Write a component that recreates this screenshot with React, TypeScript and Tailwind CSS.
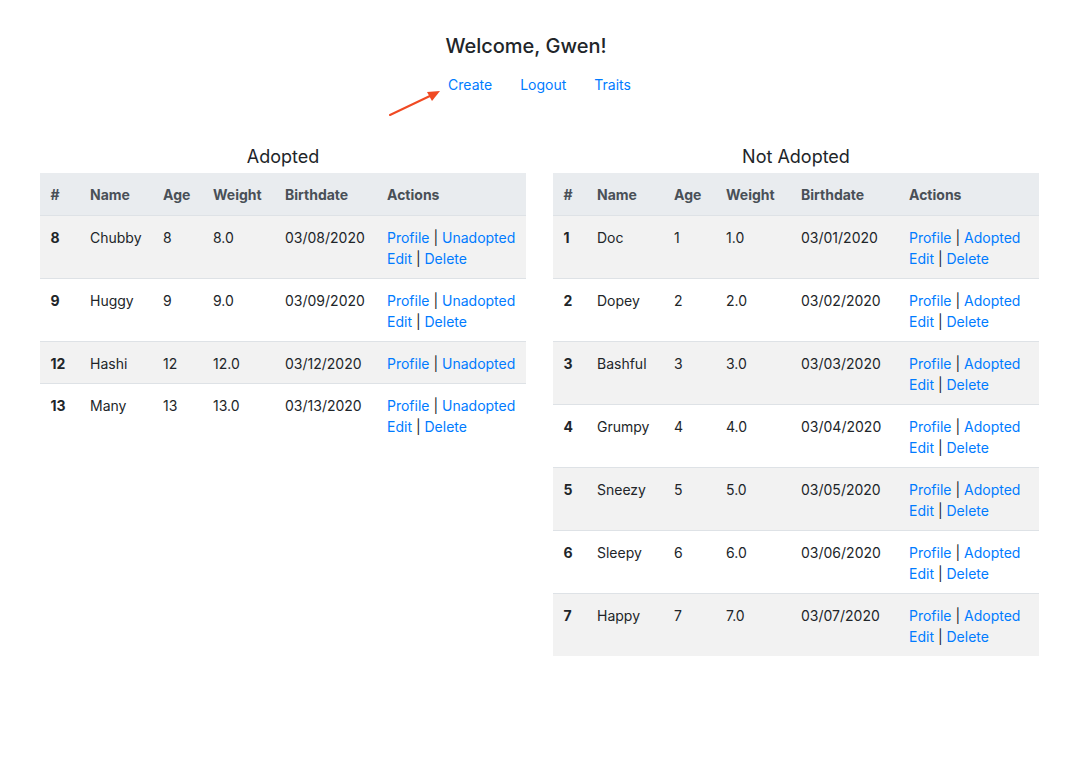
type Pet = { id: number; name: string; age: number; day: string; edit: boolean };

const adopted: Pet[] = [
  { id: 8, name: "Chubby", age: 8, day: "08", edit: true },
  { id: 9, name: "Huggy", age: 9, day: "09", edit: true },
  { id: 12, name: "Hashi", age: 12, day: "12", edit: false },
  { id: 13, name: "Many", age: 13, day: "13", edit: true },
];

const notAdopted: Pet[] = [
  { id: 1, name: "Doc", age: 1, day: "01", edit: true },
  { id: 2, name: "Dopey", age: 2, day: "02", edit: true },
  { id: 3, name: "Bashful", age: 3, day: "03", edit: true },
  { id: 4, name: "Grumpy", age: 4, day: "04", edit: true },
  { id: 5, name: "Sneezy", age: 5, day: "05", edit: true },
  { id: 6, name: "Sleepy", age: 6, day: "06", edit: true },
  { id: 7, name: "Happy", age: 7, day: "07", edit: true },
];

const cell = "px-[10.5px] pt-[11px] pb-[9px] align-top text-left";

function PetTable({
  title,
  pets,
  toggle,
  widths,
}: {
  title: string;
  pets: Pet[];
  toggle: string;
  widths: string[];
}) {
  return (
    <div className="w-[486px]">
      <h2 className="pb-[4px] text-center text-[18px] leading-[24px] text-[#212529]">{title}</h2>
      <table className="w-full table-fixed border-collapse text-[14px] leading-[21px]">
        <colgroup>
          {widths.map((w, i) => (
            <col key={i} className={w} />
          ))}
        </colgroup>
        <thead>
          <tr className="bg-[#e9ecef] text-[#495057]">
            {["#", "Name", "Age", "Weight", "Birthdate", "Actions"].map((h) => (
              <th key={h} className={`${cell} border-b border-[#dee2e6] !pb-[10px] font-bold`}>
                {h}
              </th>
            ))}
          </tr>
        </thead>
        <tbody>
          {pets.map((p, i) => (
            <tr
              key={p.id}
              className={`border-t border-[#dee2e6] ${i % 2 === 0 ? "bg-[#f2f2f2]" : "bg-white"}`}
            >
              <th className={`${cell} font-bold`}>{p.id}</th>
              <td className={cell}>{p.name}</td>
              <td className={cell}>{p.age}</td>
              <td className={cell}>{p.age}.0</td>
              <td className={cell}>03/{p.day}/2020</td>
              <td className={`${cell} whitespace-nowrap`}>
                <div>
                  <a className="text-[#007bff]">Profile</a> | <a className="text-[#007bff]">{toggle}</a>
                </div>
                {p.edit && (
                  <div>
                    <a className="text-[#007bff]">Edit</a> | <a className="text-[#007bff]">Delete</a>
                  </div>
                )}
              </td>
            </tr>
          ))}
        </tbody>
      </table>
    </div>
  );
}

export default function App() {
  return (
    <div className="relative min-h-[759px] bg-white font-['Inter','Liberation_Sans',sans-serif] text-[#212529]">
      <div className="w-[1084px] pt-[34px]">
        <div className="flex justify-center pr-[32px]">
          <h1 className="text-[20px] leading-[24px] font-medium">Welcome, Gwen!</h1>
        </div>
        <nav className="mt-[8.5px] flex justify-center pr-[5px] text-[14px] leading-[21px]">
          {["Create", "Logout", "Traits"].map((l) => (
            <a key={l} className="px-[14px] py-[7px] text-[#007bff]">
              {l}
            </a>
          ))}
        </nav>
        <div className="mt-[43px] flex gap-[27px] pl-[40px]">
          <PetTable
            title="Adopted"
            pets={adopted}
            toggle="Unadopted"
            widths={["w-[39.5px]", "w-[73px]", "w-[50px]", "w-[72px]", "w-[102px]", "w-[149.5px]"]}
          />
          <PetTable
            title="Not Adopted"
            pets={notAdopted}
            toggle="Adopted"
            widths={["w-[33.5px]", "w-[77px]", "w-[52px]", "w-[75px]", "w-[108px]", "w-[140.5px]"]}
          />
        </div>
      </div>
      <svg className="absolute left-[386px] top-[86px]" width="60" height="34" viewBox="0 0 60 34">
        <line x1="4" y1="29" x2="46" y2="9" stroke="#f04a23" strokeWidth="2" strokeLinecap="round" />
        <polygon points="54,5 41,6 46,15" fill="#f04a23" />
      </svg>
    </div>
  );
}
